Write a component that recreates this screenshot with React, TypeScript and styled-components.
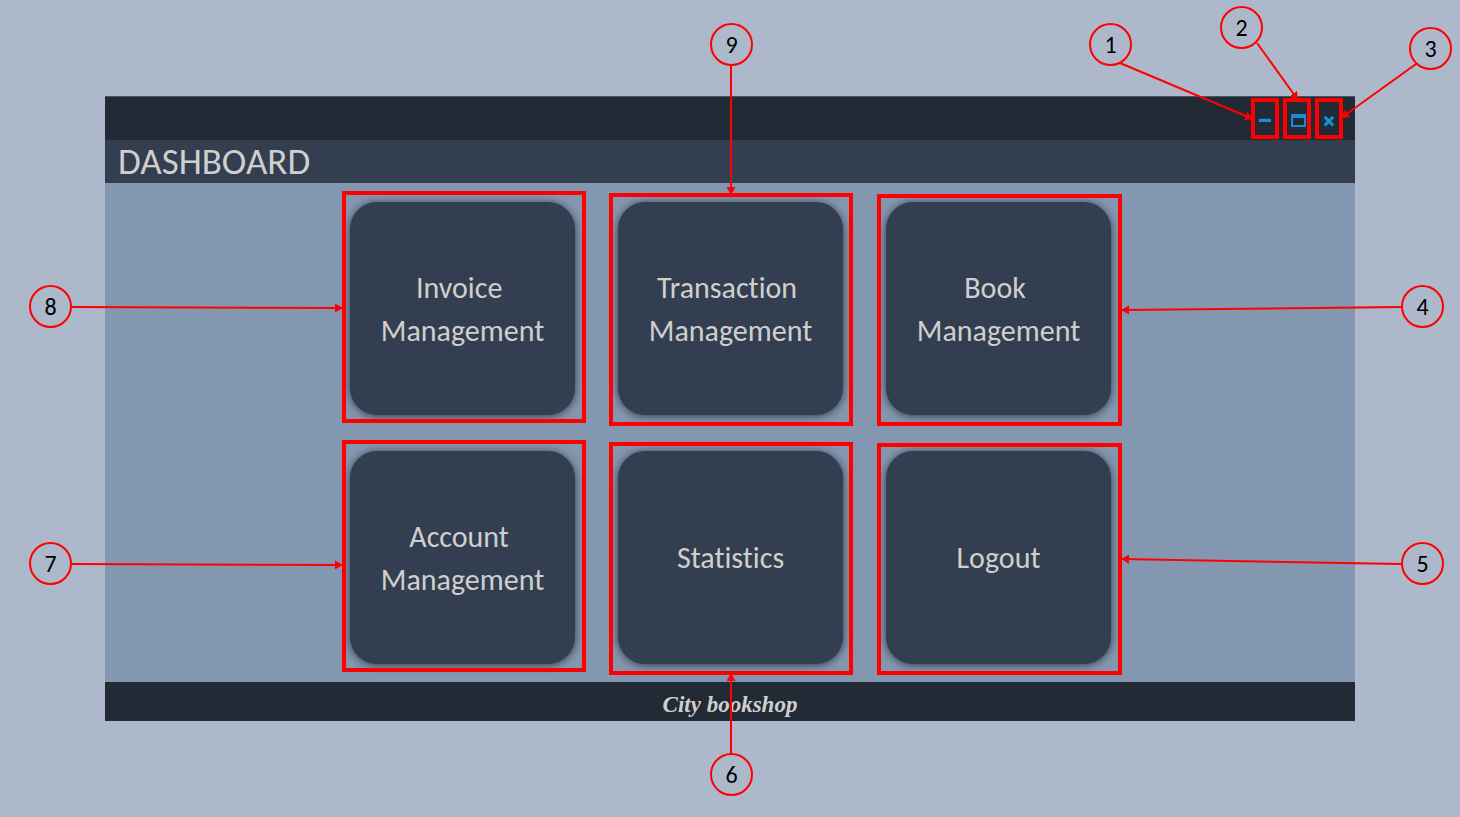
import React from "react";
import styled, { createGlobalStyle } from "styled-components";

const color = {
  page: "#adb9ca",
  bar: "#222a35",
  barEdge: "#4a5463",
  panel: "#333f50",
  body: "#8497b0",
  text: "#d0cece",
  control: "#1b8bd8",
  mark: "#ff0000",
};

const GlobalStyle = createGlobalStyle`
  *, *::before, *::after { box-sizing: border-box; }
  body {
    margin: 0;
    background: ${color.page};
    font-family: Calibri, Carlito, Lato, "Liberation Sans", sans-serif;
    font-variant-ligatures: none;
  }
`;

const Page = styled.main`
  position: relative;
  min-height: 100vh;
  padding: 96px 105px;
  overflow: hidden;
`;

const AppWindow = styled.section`
  display: flex;
  flex-direction: column;
  background: ${color.body};
`;

const TitleBar = styled.div`
  display: flex;
  justify-content: flex-end;
  height: 44px;
  padding-right: 10px;
  background: ${color.bar};
  box-shadow: inset 0 1px ${color.barEdge};
`;

const WindowButton = styled.button`
  width: 32px;
  height: 44px;
  padding: 0;
  border: 0;
  background: transparent;
  color: ${color.control};
  cursor: pointer;

  svg { display: block; }
`;

const Header = styled.header`
  display: flex;
  align-items: center;
  height: 43px;
  padding: 0 13px;
  background: ${color.panel};
`;

const Title = styled.h1`
  margin: 0;
  color: ${color.text};
  font-size: 37px;
  font-weight: 400;
  line-height: 43px;
`;

const TileGrid = styled.nav`
  display: grid;
  grid-template-columns: repeat(3, 225px);
  justify-content: center;
  gap: 36px 43px;
  padding: 19px 0 18px 1px;
`;

const Tile = styled.button`
  height: 213px;
  padding: 0;
  border: 0;
  border-radius: 27px;
  background: ${color.panel};
  box-shadow: 0 1px 8px rgba(20, 25, 35, 0.75);
  color: ${color.text};
  font-family: inherit;
  font-variant-ligatures: none;
  font-size: 30px;
  line-height: 43px;
  text-align: center;
  white-space: pre;
  cursor: pointer;
`;

const Footer = styled.footer`
  height: 39px;
  background: ${color.bar};
  color: ${color.text};
  font-family: "Brush Script MT", "Liberation Serif", cursive;
  font-size: 23px;
  font-style: italic;
  font-weight: 700;
  line-height: 46px;
  text-align: center;
`;

const Annotations = styled.div`
  position: absolute;
  top: 0;
  left: 50%;
  width: 1460px;
  height: 817px;
  margin-left: -730px;
  pointer-events: none;
`;

const Drawing = styled.svg`
  position: absolute;
  top: 0;
  left: 0;
`;

const Callout = styled.span<{ $x: number; $y: number }>`
  position: absolute;
  left: ${(p) => p.$x}px;
  top: ${(p) => p.$y}px;
  width: 43px;
  height: 43px;
  border: 2px solid ${color.mark};
  border-radius: 50%;
  color: #000;
  font-size: 24px;
  line-height: 40px;
  text-align: center;
`;

const tiles = [
  "Invoice \nManagement",
  "Transaction \nManagement",
  "Book \nManagement",
  "Account \nManagement",
  "Statistics",
  "Logout",
];

// x, y, width, height of the outer edge of each highlighted area
const frames = [
  [1251, 98, 28, 41],
  [1283, 98, 28, 41],
  [1315, 98, 28, 41],
  [342, 191, 244, 232],
  [609, 193, 244, 233],
  [877, 194, 245, 232],
  [342, 440, 244, 232],
  [609, 442, 244, 233],
  [877, 443, 245, 232],
];

// circle position, then the arrow from its edge to its target
const callouts = [
  { n: 1, at: [1089, 23], line: [1120, 63, 1253, 119] },
  { n: 2, at: [1220, 6], line: [1257, 43, 1298, 100] },
  { n: 3, at: [1409, 27], line: [1416, 64, 1341, 118] },
  { n: 4, at: [1401, 285], line: [1401, 307, 1121, 310] },
  { n: 5, at: [1401, 542], line: [1401, 564, 1121, 559] },
  { n: 6, at: [710, 753], line: [731, 753, 731, 673] },
  { n: 7, at: [29, 542], line: [72, 564, 343, 565] },
  { n: 8, at: [29, 285], line: [72, 307, 343, 308] },
  { n: 9, at: [710, 23], line: [731, 66, 731, 195] },
];

export default function App() {
  return (
    <Page>
      <GlobalStyle />
      <AppWindow>
        <TitleBar>
          <WindowButton aria-label="Minimize">
            <svg width="32" height="44" fill="currentColor" aria-hidden="true">
              <rect x="10" y="22.7" width="12" height="3.3" rx="0.5" />
            </svg>
          </WindowButton>
          <WindowButton aria-label="Maximize">
            <svg width="32" height="44" fill="currentColor" aria-hidden="true">
              <path
                fillRule="evenodd"
                d="M11 18h13a1 1 0 0 1 1 1v11a1 1 0 0 1-1 1H11a1 1 0 0 1-1-1V19a1 1 0 0 1 1-1zM12 22v7h11v-7z"
              />
            </svg>
          </WindowButton>
          <WindowButton aria-label="Close">
            <svg width="32" height="44" stroke="currentColor" strokeWidth="3.2" aria-hidden="true">
              <path d="M11.7 20.9l8.4 8.4M20.1 20.9l-8.4 8.4" />
            </svg>
          </WindowButton>
        </TitleBar>
        <Header>
          <Title>DASHBOARD</Title>
        </Header>
        <TileGrid aria-label="Dashboard">
          {tiles.map((label) => (
            <Tile key={label}>{label}</Tile>
          ))}
        </TileGrid>
        <Footer>City bookshop</Footer>
      </AppWindow>

      <Annotations>
        <Drawing width="1460" height="817" aria-hidden="true">
          <defs>
            <marker
              id="arrow"
              viewBox="0 0 8 9"
              refX="8"
              refY="4.5"
              markerWidth="8"
              markerHeight="9"
              markerUnits="userSpaceOnUse"
              orient="auto"
            >
              <path d="M0 0L8 4.5L0 9z" fill={color.mark} />
            </marker>
          </defs>
          {frames.map(([x, y, w, h]) => (
            <rect
              key={`${x}-${y}`}
              x={x + 2}
              y={y + 2}
              width={w - 4}
              height={h - 4}
              fill="none"
              stroke={color.mark}
              strokeWidth="4"
            />
          ))}
          {callouts.map(({ n, line: [x1, y1, x2, y2] }) => (
            <line
              key={n}
              x1={x1}
              y1={y1}
              x2={x2}
              y2={y2}
              stroke={color.mark}
              strokeWidth="2"
              markerEnd="url(#arrow)"
            />
          ))}
        </Drawing>
        {callouts.map(({ n, at: [x, y] }) => (
          <Callout key={n} $x={x} $y={y}>
            {n}
          </Callout>
        ))}
      </Annotations>
    </Page>
  );
}
